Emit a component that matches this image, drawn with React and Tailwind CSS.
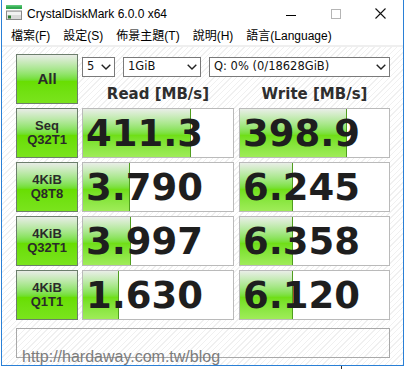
import React from 'react';

const rows = [
  { l1: 'Seq', l2: 'Q32T1', read: '411.3', write: '398.9', rw: 108, ww: 107 },
  { l1: '4KiB', l2: 'Q8T8', read: '3.790', write: '6.245', rw: 47, ww: 53 },
  { l1: '4KiB', l2: 'Q32T1', read: '3.997', write: '6.358', rw: 48, ww: 53 },
  { l1: '4KiB', l2: 'Q1T1', read: '1.630', write: '6.120', rw: 36, ww: 53 },
];

const menus = ['檔案(F)', '設定(S)', '佈景主題(T)', '說明(H)', '語言(Language)'];

const greenBtn =
  'border border-[#6c7e6c] bg-linear-to-b from-[#e8ece6] via-[#68de02] via-55% to-[#7ae41c] flex flex-col items-center justify-center text-[#2a2a2a] font-bold font-["Liberation_Sans",sans-serif]';

const Chevron = () => (
  <svg width="10" height="6" viewBox="0 0 10 6" className="shrink-0">
    <path d="M0.7 0.7 L5 5 L9.3 0.7" fill="none" stroke="#222" strokeWidth="1.4" />
  </svg>
);

const Select = ({ w, text }) => (
  <div
    className={`${w} h-[20px] border border-[#7a7a7a] bg-white flex items-center justify-between pl-[4px] pr-[3px] text-[11.5px] text-[#111] font-["DejaVu_Sans",sans-serif]`}
  >
    <span>{text}</span>
    <Chevron />
  </div>
);

const ValueBox = ({ w, value, bar }) => (
  <div className={`${w} h-[50px] border border-[#bababa] bg-white relative flex items-center`}>
    <div
      className="absolute left-0 top-0 bottom-0 border-r border-[#4f9d1e] bg-linear-to-b from-[#e9eee7] via-[#70df16] via-55% to-[#9fec58]"
      style={{ width: bar }}
    />
    <span className='relative pl-[3px] text-[37px] leading-none font-bold text-[#1e1e1e] font-["DejaVu_Sans",sans-serif]'>
      {value}
    </span>
  </div>
);

const DiskIcon = () => (
  <svg width="16" height="15" viewBox="0 0 16 15">
    <rect x="0" y="0" width="16" height="4" fill="#2fa84f" />
    <rect x="0" y="0" width="16" height="1.5" fill="#5cc777" />
    <rect x="0.5" y="6" width="15" height="8.5" fill="#d9d9d9" stroke="#8a8a8a" />
    <rect x="1" y="7" width="14" height="3" fill="#f2f2f2" />
    <rect x="2" y="10.5" width="3" height="3" fill="#2e7d32" />
  </svg>
);

export default function App() {
  return (
    <div className="w-[406px] h-[369px] bg-white relative overflow-hidden">
      <div className="ml-[1px] w-[403px] h-[366px] border-x border-b border-[#2a80d6] flex flex-col bg-white">
        {/* title bar */}
        <div className='h-[30px] flex items-start pl-[4px] font-["Liberation_Sans",sans-serif] text-[12px] text-black'>
          <div className="mt-[5px]">
            <DiskIcon />
          </div>
          <span className="ml-[5px] mt-[6px] leading-[16px]">CrystalDiskMark 6.0.0 x64</span>
          <div className="ml-auto flex h-[30px]">
            <div className="w-[45px] flex items-center justify-center">
              <div className="w-[10px] h-[1px] bg-black" />
            </div>
            <div className="w-[45px] flex items-center justify-center">
              <div className="w-[10px] h-[10px] border border-[#b5b5b5] -mt-[3px]" />
            </div>
            <div className="w-[45px] flex items-center justify-center">
              <svg width="11" height="11" viewBox="0 0 11 11" className="-mt-[3px]">
                <path d="M0.5 0.5 L10.5 10.5 M10.5 0.5 L0.5 10.5" stroke="#111" strokeWidth="1.1" />
              </svg>
            </div>
          </div>
        </div>

        {/* menu bar */}
        <div className='h-[15px] border-b-2 border-[#efefef] box-content flex items-start gap-[13px] pl-[9px] text-[12px] leading-[13px] text-black font-["Liberation_Sans","Noto_Sans_CJK_TC",sans-serif]'>
          {menus.map((m) => (
            <span key={m}>{m}</span>
          ))}
        </div>

        {/* client area */}
        <div className="flex-1 pt-[7px] pl-[14px] pr-[13px] bg-[repeating-linear-gradient(135deg,#ffffff_0px,#ffffff_3px,#f0f0f0_3px,#f0f0f0_4px)]">
          <div className="flex h-[50px]">
            <div className={`w-[62px] h-[50px] ${greenBtn} text-[15px]`}>All</div>
            <div className="ml-[4px] w-[308px] flex flex-col">
              <div className="mt-[3px] flex gap-[8px]">
                <Select w="w-[33px]" text="5" />
                <Select w="w-[78px]" text="1GiB" />
                <Select w="w-[181px]" text="Q: 0% (0/18628GiB)" />
              </div>
              <div className='mt-[10px] flex text-[15px] leading-[15px] font-bold text-[#2e2e2e] font-["DejaVu_Sans",sans-serif]'>
                <div className="w-[152px] text-center">Read [MB/s]</div>
                <div className="ml-[5px] w-[151px] text-center">Write [MB/s]</div>
              </div>
            </div>
          </div>

          {rows.map((r, i) => (
            <div key={i} className="mt-[4px] flex">
              <div className={`w-[62px] h-[50px] ${greenBtn} text-[13px] leading-[14px]`}>
                <span>{r.l1}</span>
                <span>{r.l2}</span>
              </div>
              <div className="ml-[4px]">
                <ValueBox w="w-[152px]" value={r.read} bar={r.rw} />
              </div>
              <div className="ml-[5px]">
                <ValueBox w="w-[151px]" value={r.write} bar={r.ww} />
              </div>
            </div>
          ))}

          <div className="mt-[8px] h-[30px] border border-[#a9a9a9]" />
        </div>
      </div>

      <div className='absolute left-[22px] top-[349px] text-[16px] leading-[16px] text-[#7c7c7c] font-["Liberation_Sans",sans-serif]'>
        http://hardaway.com.tw/blog
      </div>
      <div className="absolute left-[341px] top-[366px] w-[1px] h-[3px] bg-[#333]" />
    </div>
  );
}
